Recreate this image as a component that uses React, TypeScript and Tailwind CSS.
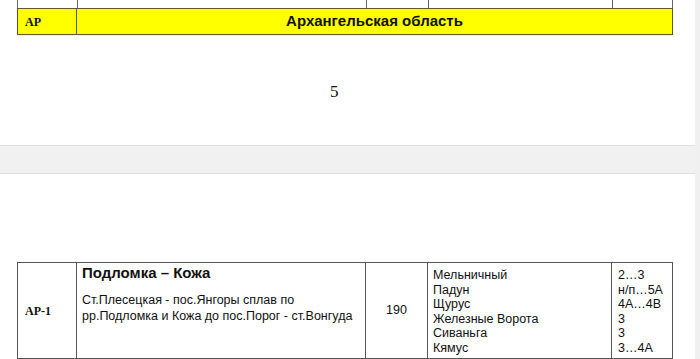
const arial = { fontFamily: '"Liberation Sans", Arial, sans-serif' };

const routes = [
  ['Мельничный', '2…3'],
  ['Падун', 'н/п…5А'],
  ['Щурус', '4А…4В'],
  ['Железные Ворота', '3'],
  ['Сиваньга', '3'],
  ['Кямус', '3…4А'],
];

export default function App() {
  return (
    <div className="flex w-[700px] h-[359px] overflow-hidden bg-white">
      <div className="flex flex-col w-[695px]">
        {/* page 1 bottom */}
        <div className="h-[145px] bg-white shrink-0">
          <div className="ml-[17px] w-[656px]">
            <div className="flex h-[8px] border-l border-[#666]">
              <div className="w-[60px] border-r border-[#666]" />
              <div className="w-[289px] border-r border-[#666]" />
              <div className="w-[62px] border-r border-[#666]" />
              <div className="w-[184px] border-r border-[#666]" />
              <div className="flex-1 border-r border-[#666]" />
            </div>
            <div className="flex h-[27px] bg-[#ffff00] border border-[#5a5a2a] shadow-[0_1px_2px_rgba(0,0,0,0.08)]">
              <div className="w-[59px] border-r border-[#5a5a2a] flex items-center pl-[7px] font-bold text-[12px] text-[#111]" style={{ fontFamily: '"Liberation Serif", "Times New Roman", serif' }}>
                АР
              </div>
              <div className="flex-1 flex items-center justify-center font-bold text-[15px] text-[#111]" style={arial}>
                Архангельская область
              </div>
            </div>
          </div>
          <div className="pl-[330px] pt-[47px] text-[17px] leading-[20px] text-[#111]" style={{ fontFamily: '"Liberation Serif", "Times New Roman", serif' }}>
            5
          </div>
        </div>

        {/* gap between pages */}
        <div className="h-[29px] shrink-0 bg-[#f1f1f1] border-t border-b border-[#e2e2e2]" />

        {/* page 2 top */}
        <div className="flex-1 bg-white pt-[88px]">
          <div className="ml-[17px] w-[656px] flex h-[97px] border border-[#555] text-[#111]" style={arial}>
            <div className="w-[59px] border-r border-[#555] flex items-center pl-[7px] font-bold text-[12px]" style={{ fontFamily: '"Liberation Serif", "Times New Roman", serif' }}>
              АР-1
            </div>
            <div className="w-[289px] border-r border-[#555] pl-[5px] pt-[1px]">
              <div className="font-bold text-[15px] leading-[18px]">Подломка – Кожа</div>
              <div className="mt-[10px] text-[12.5px] leading-[16px]">
                Ст.Плесецкая - пос.Янгоры сплав по
                <br />
                рр.Подломка и Кожа до пос.Порог - ст.Вонгуда
              </div>
            </div>
            <div className="w-[62px] border-r border-[#555] flex items-center justify-center text-[12.5px]">190</div>
            <div className="w-[184px] border-r border-[#555] pl-[5px] pt-[5px] text-[12.5px] leading-[14.5px]">
              {routes.map(([n]) => (
                <div key={n}>{n}</div>
              ))}
            </div>
            <div className="flex-1 pl-[6px] pt-[5px] text-[12.5px] leading-[14.5px]">
              {routes.map(([n, v]) => (
                <div key={n}>{v}</div>
              ))}
            </div>
          </div>
        </div>
      </div>
      <div className="w-[5px] bg-[#f0f0f0]" />
    </div>
  );
}
